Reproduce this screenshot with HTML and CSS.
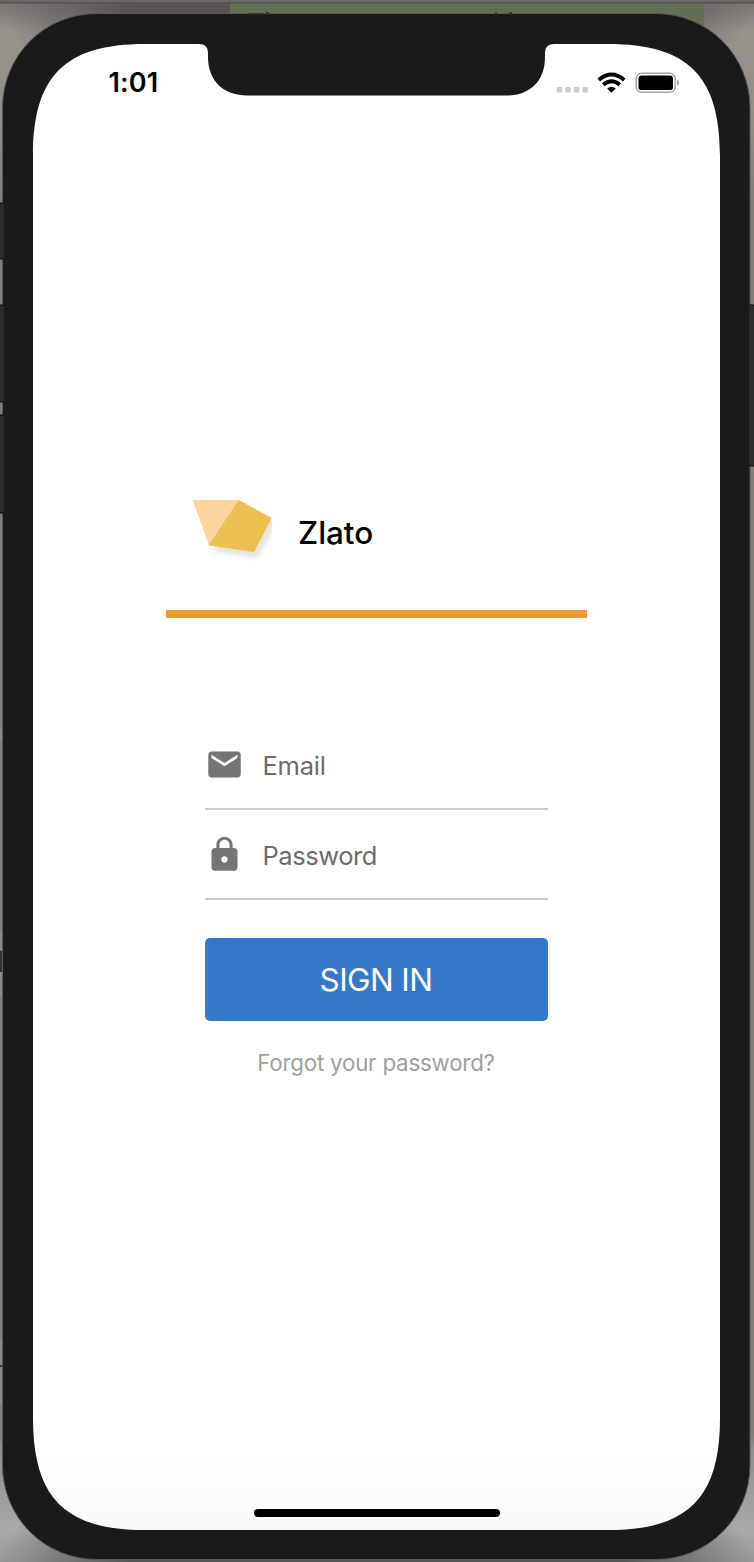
FILE: index.html
```html
<!DOCTYPE html>
<html lang="en">
<head>
<meta charset="utf-8">
<title>Zlato</title>
<link rel="stylesheet" href="styles.css">
</head>
<body>
<main class="desktop">
  <svg class="frame" width="754" height="1562" viewBox="0 0 754 1562" aria-hidden="true">
    <defs>
      <linearGradient id="side" x1="0" y1="0" x2="0" y2="1">
        <stop offset="0" stop-color="#777370"/><stop offset=".02" stop-color="#98928d"/><stop offset=".07" stop-color="#938e88"/><stop offset=".13" stop-color="#817d78"/><stop offset=".92" stop-color="#817d79"/><stop offset=".925" stop-color="#8c8c8c"/><stop offset=".98" stop-color="#aaa"/><stop offset="1" stop-color="#999"/>
      </linearGradient>
      <radialGradient id="shade" cx=".5" cy=".5" r=".5">
        <stop offset="0" stop-color="#585454"/><stop offset=".65" stop-color="#585454"/><stop offset="1" stop-color="#585454" stop-opacity="0"/>
      </radialGradient>
      <linearGradient id="screen" x1="0" y1="0" x2="0" y2="1">
        <stop offset=".95" stop-color="#fff"/><stop offset="1" stop-color="#f9f9f9"/>
      </linearGradient>
    </defs>
    <rect width="754" height="1562" fill="url(#side)"/>
    <ellipse cx="377" cy="10" rx="377" ry="110" fill="url(#shade)"/>
    <ellipse cx="377" cy="1560" rx="377" ry="110" fill="url(#shade)"/>
    <path d="M230 3h474v40H230z" fill="#626e56"/>
    <path d="M0 0h754v2H0z" fill="#69696b"/>
    <path d="M0 2h754v1.500H0z" fill="#555351"/>
    <path d="M0 727h2v15H0zM0 930h2v20H0zM0 972h2v24H0zM0 1338h2v66H0z" fill="#858a8a"/>
    <path d="M0 951h3v21H0zM0 1365h3v2H0z" fill="#333"/>
    <rect x="2.500" y="13.500" width="747.500" height="1546" rx="94" fill="#1a1a1a" stroke="#5b5a58"/>
    <path d="M248 13h16v1.500h-16zM266 12h3v2.500h-3zM495 12h2v2.500h-2zM509 12h3v2.500h-3z" fill="#343b30"/>
    <path d="M0 203h4v56H0zM0 305h4v97H0zM0 415h4v98H0zM749 305h5v161h-5z" fill="#2c2c2c"/>
    <path d="M0 203h4M0 259h4M0 305h4M0 402h4M0 415h4M0 513h4M749 305h5M749 466h5" stroke="#0a0a0a"/>
    <path fill="url(#screen)" d="M33 156C33 76 65 44 145 44H199Q208 44 208 53V57C208 82 225 95.500 247 95.500H507C529 95.500 545 82 545 57V53Q545 44 554 44H608C688 44 720 76 720 156V1418C720 1498 688 1530 608 1530H145C65 1530 33 1498 33 1418Z"/>
  </svg>

  <section class="screen">
    <header class="status">
      <span class="time">1:01</span>
      <svg class="indicators" width="124" height="24" viewBox="0 0 124 24" aria-hidden="true">
        <g fill="#ccc"><rect x=".7" y="16" width="5.600" height="5.600" rx="1.300"/><rect x="9.200" y="16" width="5.600" height="5.600" rx="1.300"/><rect x="17.800" y="16" width="5.600" height="5.600" rx="1.300"/><rect x="26.300" y="16" width="5.600" height="5.600" rx="1.300"/></g>
        <g fill="none" stroke="#000" stroke-width="3.900"><path d="M42.800 9Q55.500-1.800 68.200 9"/><path d="M47.200 13.800Q55.500 6.800 63.800 13.800"/></g>
        <path d="M51.200 17.600Q55.500 14 59.800 17.600L55.500 21.800Z"/>
        <rect x="80.200" y="2.300" width="39" height="19" rx="5.500" fill="none" stroke="#a4a4a4" stroke-width="1.500"/>
        <rect x="82.500" y="4.500" width="34.500" height="14.600" rx="3.200"/>
        <path d="M121 8.500q2.200.8 2.200 3.300T121 15.100z" fill="#a4a4a4"/>
      </svg>
    </header>

    <div class="brand">
      <svg class="logo" width="80" height="64" viewBox="0 0 80 64" aria-hidden="true">
        <defs><filter id="soft"><feGaussianBlur stdDeviation="2.300"/></filter></defs>
        <path d="M50 5L85 24L66 59L21 53Z" fill="#000" opacity=".1" filter="url(#soft)"/>
        <path d="M.7 1H46.500L17 46.500Z" fill="#fbd59d"/>
        <path d="M46.500 1L79.700 19L62 53L16.500 46.500Z" fill="#ecc052"/>
      </svg>
      <h1 class="name">Zlato</h1>
    </div>

    <form class="form">
      <div class="field">
        <svg class="icon" width="39" height="39" viewBox="0 0 24 24" aria-hidden="true"><path fill="#757575" d="M20 4H4c-1.100 0-1.990.9-1.990 2L2 18c0 1.100.9 2 2 2h16c1.100 0 2-.9 2-2V6c0-1.100-.9-2-2-2zm0 4l-8 5-8-5V6l8 5 8-5v2z"/></svg>
        <span class="placeholder email">Email</span>
      </div>
      <div class="field">
        <svg class="icon" width="39" height="39" viewBox="0 0 24 24" aria-hidden="true"><path fill="#757575" d="M18 8h-1V6c0-2.760-2.240-5-5-5S7 3.240 7 6v2H6c-1.100 0-2 .9-2 2v10c0 1.100.9 2 2 2h12c1.100 0 2-.9 2-2V10c0-1.100-.9-2-2-2zm-6 9c-1.100 0-2-.9-2-2s.9-2 2-2 2 .9 2 2-.9 2-2 2zm3.100-9H8.900V6c0-1.710 1.390-3.100 3.100-3.100 1.710 0 3.100 1.390 3.100 3.100v2z"/></svg>
        <span class="placeholder password">Password</span>
      </div>
      <button class="submit" type="button"><span>SIGN IN</span></button>
      <a class="forgot">Forgot your password?</a>
    </form>
    <div class="home"></div>
  </section>
</main>
</body>
</html>
```
FILE: styles.css
```css
* { box-sizing: border-box; }
body { margin: 0; font-family: Inter, "Liberation Sans", sans-serif; }
.desktop { position: relative; display: flow-root; width: 754px; height: 1562px; overflow: hidden; }
.frame { position: absolute; inset: 0; display: block; }
.screen {
  position: relative;
  width: 687px;
  height: 1486px;
  margin: 44px 0 0 33px;
  padding-bottom: 13px;
  display: flex;
  flex-direction: column;
  align-items: center;
}
.status {
  width: 100%;
  height: 77px;
  padding: 0 40px 0 75.500px;
  display: flex;
  align-items: center;
  justify-content: space-between;
}
.time { font-size: 27px; font-weight: 600; letter-spacing: .1px; line-height: 32px; }
.brand {
  width: 421px;
  height: 118.500px;
  margin-top: 378px;
  padding-left: 26px;
  border-bottom: 8px solid #f29c38;
  display: flex;
  align-items: flex-start;
}
.logo { flex: none; }
.name { margin: 13.500px 0 0 26px; font-size: 31.500px; line-height: 40px; font-weight: 500; letter-spacing: -.05px; }
.form { width: 343px; margin: 102.500px 1px 0 0; display: flex; flex-direction: column; }
.field { height: 90px; padding-top: 1px; display: flex; align-items: center; border-bottom: 2px solid #ccc; }
.icon { flex: none; }
.placeholder { margin: 3px 0 0 19px; color: #6c6c6c; font-size: 25.500px; line-height: 32px; letter-spacing: -.45px; }
.email { letter-spacing: -.25px; }
.submit {
  height: 83px;
  margin-top: 38px;
  padding: 0;
  border: 0;
  border-radius: 5px;
  background: #3578cc;
  color: #fff;
  font: 400 31.500px/40px Inter, "Liberation Sans", sans-serif;
  letter-spacing: -.6px;
}
.forgot { margin-top: 26.500px; text-align: center; color: #a0a0a0; font-size: 22.300px; line-height: 30px; letter-spacing: -.2px; }
.home { width: 246px; height: 8px; margin-top: auto; border-radius: 4px; background: #000; }
```
